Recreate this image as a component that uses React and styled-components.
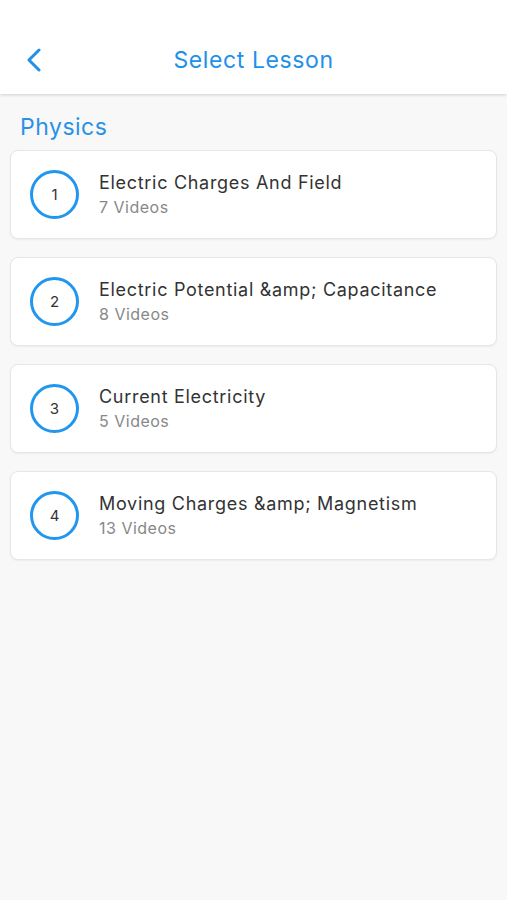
import React from 'react'
import styled, { createGlobalStyle } from 'styled-components'

const GlobalStyle = createGlobalStyle`
  html, body {
    margin: 0;
    padding: 0;
    background: #f8f8f8;
    font-family: Inter, "Noto Sans", sans-serif;
  }
`

const Page = styled.div`
  min-height: 900px;
  background: #f8f8f8;
`

const Header = styled.header`
  height: 94px;
  background: #fff;
  box-shadow: 0 1px 3px rgba(0, 0, 0, 0.16);
  display: grid;
  grid-template-columns: 60px 1fr 60px;
  align-items: end;
  box-sizing: border-box;
  position: relative;
  z-index: 1;
`

const BackButton = styled.button`
  border: none;
  background: none;
  padding: 0 0 0 26px;
  height: 68px;
  display: flex;
  align-items: center;
  color: #2190e9;
  cursor: pointer;
`

const Title = styled.h1`
  margin: 0;
  height: 68px;
  display: flex;
  align-items: center;
  justify-content: center;
  font-size: 23px;
  font-weight: 400;
  color: #2190e9;
  letter-spacing: 0.6px;
`

const Content = styled.main`
  padding: 18px 10px 0;
`

const Subject = styled.h2`
  margin: 0 0 8px 10px;
  font-size: 23px;
  font-weight: 400;
  color: #2a92e6;
  line-height: 30px;
  letter-spacing: 0.5px;
`

const List = styled.div`
  display: flex;
  flex-direction: column;
  gap: 18px;
`

const Card = styled.div`
  height: 89px;
  box-sizing: border-box;
  background: #fff;
  border: 1px solid #e6e6e6;
  border-radius: 8px;
  box-shadow: 0 1px 2px rgba(0, 0, 0, 0.05);
  display: flex;
  align-items: center;
  padding-left: 19px;
`

const Badge = styled.div`
  width: 49px;
  height: 49px;
  box-sizing: border-box;
  border: 3px solid #2196ef;
  border-radius: 50%;
  display: flex;
  align-items: center;
  justify-content: center;
  font-size: 15px;
  color: #333;
  flex-shrink: 0;
`

const Info = styled.div`
  margin-left: 20px;
  display: flex;
  flex-direction: column;
  gap: 3px;
  margin-top: -1px;
`

const LessonName = styled.div`
  font-size: 18px;
  color: #333;
  line-height: 22px;
  letter-spacing: 0.7px;
`

const Count = styled.div`
  font-size: 16px;
  color: #888;
  line-height: 20px;
  letter-spacing: 0.5px;
`

const lessons = [
  { name: 'Electric Charges And Field', videos: 7 },
  { name: 'Electric Potential &amp; Capacitance', videos: 8 },
  { name: 'Current Electricity', videos: 5 },
  { name: 'Moving Charges &amp; Magnetism', videos: 13 },
]

const App = () => {
  return (
    <Page>
      <GlobalStyle />
      <Header>
        <BackButton aria-label="Back">
          <svg width="16" height="24" viewBox="0 0 16 24" fill="none">
            <path d="M13 2 L3 12 L13 22" stroke="currentColor" strokeWidth="3" strokeLinecap="round" strokeLinejoin="round" />
          </svg>
        </BackButton>
        <Title>Select Lesson</Title>
        <div />
      </Header>
      <Content>
        <Subject>Physics</Subject>
        <List>
          {lessons.map((l, i) => (
            <Card key={i}>
              <Badge>{i + 1}</Badge>
              <Info>
                <LessonName>{l.name}</LessonName>
                <Count>{l.videos} Videos</Count>
              </Info>
            </Card>
          ))}
        </List>
      </Content>
    </Page>
  )
}

export default App
